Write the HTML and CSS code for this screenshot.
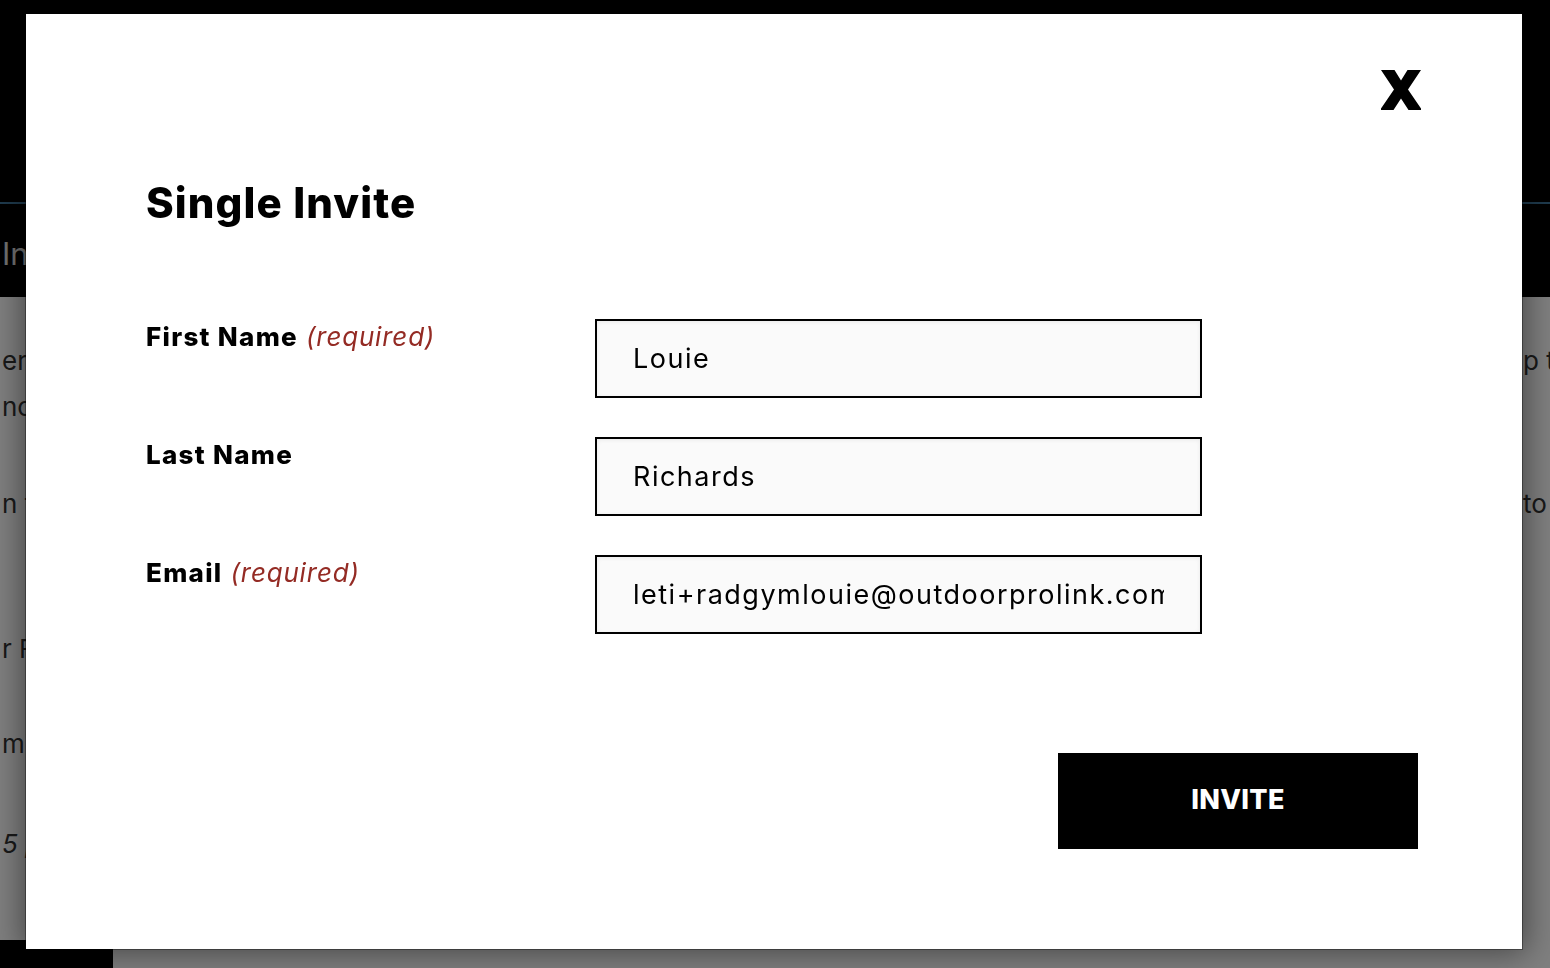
FILE: index.html
```html
<!DOCTYPE html>
<html lang="en">
<head>
<meta charset="utf-8">
<title>Single Invite</title>
<link rel="stylesheet" href="styles.css">
</head>
<body>
<div class="page">
  <header class="topbar"></header>
  <div class="rule"></div>
  <div class="subbar"><span class="subtitle">Invite Members</span></div>
  <main class="content">
    <div class="col col-left">
      <p class="ln">ers and</p>
      <p class="ln">nce</p>
      <p class="ln gap-a">n the</p>
      <p class="ln gap-b">r Fi</p>
      <p class="ln gap-c">min</p>
      <p class="ln gap-d ital">5 p</p>
    </div>
    <div class="spacer"></div>
    <div class="col col-right">
      <p class="ln">p t</p>
      <p class="ln">&nbsp;</p>
      <p class="ln gap-a">to</p>
    </div>
  </main>
  <footer class="footer"><div class="footer-block"></div></footer>
</div>
<div class="overlay"></div>
<div class="modal" role="dialog" aria-labelledby="modal-title">
  <div class="modal-top">
    <button class="close" type="button" aria-label="Close">
      <svg viewBox="0 0 40 40" width="40" height="40" aria-hidden="true">
        <polygon points="0,0 13.5,0 20,10.5 26.5,0 40,0 27,19.5 41,40 27.5,40 20,28.5 12.5,40 -1,40 13,19.5" fill="#000"/>
      </svg>
    </button>
  </div>
  <h2 class="title" id="modal-title">Single Invite</h2>
  <form class="form">
    <label class="label" for="fn">First Name <em class="req">(required)</em></label>
    <input class="input" id="fn" type="text" value="Louie">
    <label class="label" for="ln">Last Name</label>
    <input class="input" id="ln" type="text" value="Richards">
    <label class="label" for="em">Email <em class="req">(required)</em></label>
    <input class="input" id="em" type="text" value="leti+radgymlouie@outdoorprolink.com">
  </form>
  <div class="actions"><button class="invite" type="button">INVITE</button></div>
</div>
</body>
</html>
```
FILE: styles.css
```css
* { box-sizing: border-box; }
html, body { margin: 0; padding: 0; }
body {
  width: 1550px;
  height: 968px;
  overflow: hidden;
  background: #000;
  font-family: Inter, "Noto Sans", sans-serif;
}
.page {
  display: flex;
  flex-direction: column;
  height: 968px;
}
.topbar { height: 202px; background: #000; }
.rule { height: 2px; background: #3e769c; }
.subbar {
  height: 93px;
  background: #000;
  display: flex;
  align-items: center;
  padding-left: 2px;
}
.subtitle {
  color: #e2e2e2;
  font-size: 31px;
  white-space: nowrap;
  margin-top: 6px;
}
.content {
  height: 643px;
  background: #fff;
  display: flex;
  color: #333;
}
.col {
  overflow: hidden;
  padding-top: 41px;
  font-size: 26px;
  line-height: 46px;
  white-space: nowrap;
}
.col-left { width: 26px; padding-left: 2px; }
.col-right { width: 28px; padding-left: 1px; }
.spacer { flex: 1; }
.ln { margin: 0; }
.gap-a { margin-top: 51px; }
.gap-b { margin-top: 99px; }
.gap-c { margin-top: 49px; }
.gap-d { margin-top: 54px; }
.ital { font-style: italic; }
.footer { height: 28px; background: #fff; display: flex; }
.footer-block { width: 113px; background: #000; }

.overlay {
  position: fixed;
  inset: 0;
  background: rgba(0, 0, 0, 0.5);
}
.modal {
  position: fixed;
  left: 26px;
  top: 14px;
  width: 1496px;
  height: 935px;
  background: #fff;
  box-shadow: 0 0 0 1px rgba(0,0,0,0.35), 0 0 30px 4px rgba(0,0,0,0.45);
  padding: 56px 104px 0 120px;
  display: flex;
  flex-direction: column;
}
.modal-top { display: flex; justify-content: flex-end; margin-right: -3px; }
.close {
  width: 40px;
  height: 40px;
  padding: 0;
  border: 0;
  background: none;
  display: block;
}
.close svg { display: block; }
.title {
  margin: 68px 0 0;
  font-size: 42px;
  line-height: 1.2;
  font-weight: 800;
  letter-spacing: 1.1px;
  color: #000;
}
.form {
  margin-top: 91px;
  display: grid;
  grid-template-columns: 449px 607px;
  row-gap: 39px;
  align-items: start;
}
.label {
  font-size: 26px;
  line-height: 39px;
  font-weight: 800;
  letter-spacing: 1.3px;
  color: #000;
  margin-top: -2px;
}
.req {
  font-weight: 400;
  font-style: italic;
  color: #942b24;
  letter-spacing: 0.8px;
  margin-left: 1px;
}
.input {
  height: 79px;
  border: 2px solid #000;
  background: #fafafa;
  box-shadow: inset 0 1px 4px rgba(0,0,0,0.07);
  padding: 0 36px;
  font-family: Inter, "Noto Sans", sans-serif;
  font-size: 27px;
  letter-spacing: 1.5px;
  color: #000;
  outline: none;
  border-radius: 0;
}
.actions {
  margin-top: 119px;
  display: flex;
  justify-content: flex-end;
}
.invite {
  width: 360px;
  height: 96px;
  background: #000;
  color: #fff;
  border: 0;
  border-radius: 0;
  font-family: Inter, "Noto Sans", sans-serif;
  font-size: 27px;
  font-weight: 800;
  letter-spacing: 0.3px;
  padding-top: 0;
  padding-bottom: 3px;
}
```
